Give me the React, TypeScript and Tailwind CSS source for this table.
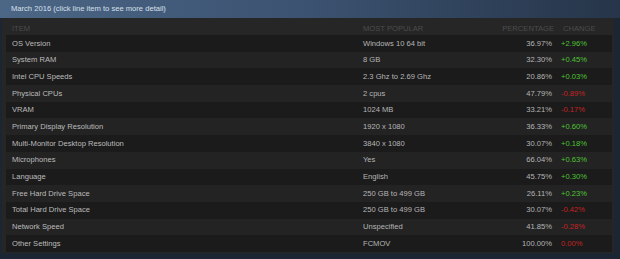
import React from "react";

const rows: [string, string, string, string][] = [
  ["OS Version", "Windows 10 64 bit", "36.97%", "+2.96%"],
  ["System RAM", "8 GB", "32.30%", "+0.45%"],
  ["Intel CPU Speeds", "2.3 Ghz to 2.69 Ghz", "20.86%", "+0.03%"],
  ["Physical CPUs", "2 cpus", "47.79%", "-0.89%"],
  ["VRAM", "1024 MB", "33.21%", "-0.17%"],
  ["Primary Display Resolution", "1920 x 1080", "36.33%", "+0.60%"],
  ["Multi-Monitor Desktop Resolution", "3840 x 1080", "30.07%", "+0.18%"],
  ["Microphones", "Yes", "66.04%", "+0.63%"],
  ["Language", "English", "45.75%", "+0.30%"],
  ["Free Hard Drive Space", "250 GB to 499 GB", "26.11%", "+0.23%"],
  ["Total Hard Drive Space", "250 GB to 499 GB", "30.07%", "-0.42%"],
  ["Network Speed", "Unspecified", "41.85%", "-0.28%"],
  ["Other Settings", "FCMOV", "100.00%", "0.00%"],
];

export default function App() {
  return (
    <div
      className="w-[620px] h-[259px] bg-[#1c2633] overflow-hidden text-[7.6px] leading-none"
      style={{ fontFamily: '"Liberation Sans", Arial, sans-serif' }}
    >
      <div className="h-[18px] flex items-center pl-[11px] bg-gradient-to-r from-[#4c6686] via-[#3b5270] to-[#263549] text-[#d6e0ea]">
        March 2016 (click line item to see more detail)
      </div>
      <div className="ml-[2px] w-[612px] h-[235px] bg-[#262626] pl-[4px] pr-[2px] pt-[4px]">
        <div className="grid grid-cols-[342px_130px_52px_48px] gap-x-[9px] h-[13px] items-center pl-[6px] text-[#4c4c4c] uppercase">
          <div>Item</div>
          <div>Most Popular</div>
          <div className="text-right">Percentage</div>
          <div>Change</div>
        </div>
        <div className="flex flex-col">
          {rows.map((r, i) => (
            <div
              key={r[0]}
              className={`grid grid-cols-[342px_130px_50px_50px] gap-x-[9px] h-[16.7px] items-center pl-[6px] ${
                i % 2 === 0 ? "bg-[#1b1b1b]" : "bg-[#232323]"
              }`}
            >
              <div className="text-[#bcbcbc]">{r[0]}</div>
              <div className="text-[#b6b6b6]">{r[1]}</div>
              <div className="text-right text-[#b6b6b6]">{r[2]}</div>
              <div className={r[3].startsWith("+") ? "text-[#4fc334]" : "text-[#c42323]"}>{r[3]}</div>
            </div>
          ))}
        </div>
      </div>
    </div>
  );
}
